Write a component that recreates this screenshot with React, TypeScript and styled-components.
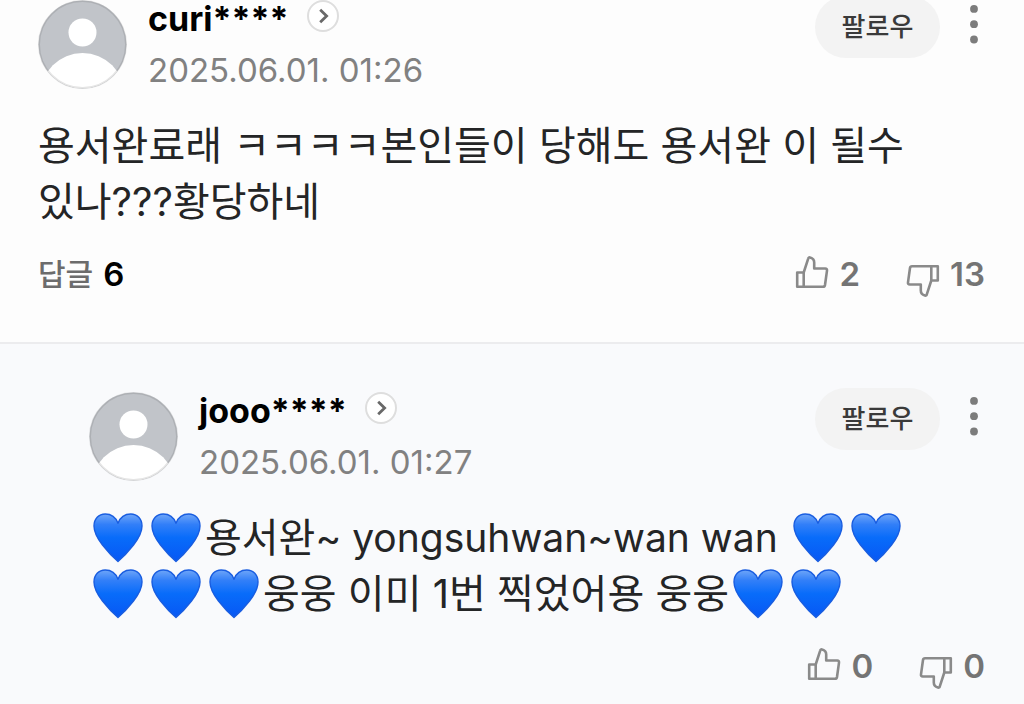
import React, { Fragment } from "react";
import styled, { createGlobalStyle } from "styled-components";

const GlobalStyle = createGlobalStyle`
  *, *::before, *::after { box-sizing: border-box; }
  body {
    margin: 0;
    background: #f9fafc;
    font-family: Inter, "Noto Sans CJK KR", sans-serif;
    color: #242526;
  }
  button { font: inherit; color: inherit; border: 0; padding: 0; background: none; cursor: pointer; }
`;

const Thread = styled.main`
  width: 100%;
`;

const Comment = styled.article<{ $reply?: boolean }>`
  display: flow-root;
  padding: ${(p) => (p.$reply ? "48px 39px 16px 89px" : "0 39px 46px 38px")};
  background: ${(p) => (p.$reply ? "#f9fafc" : "#fdfdfd")};
  border-top: ${(p) => (p.$reply ? "2px solid #ececee" : "0")};
`;

const Header = styled.header`
  display: flex;
  align-items: flex-start;
  height: 89px;
`;

const AvatarIcon = styled.svg`
  flex: none;
  width: 89px;
  height: 89px;
  margin-right: 21px;
`;

const Author = styled.div`
  flex: 1;
  min-width: 0;
`;

const NameRow = styled.div`
  display: flex;
  align-items: flex-start;
  gap: 18px;
  height: 38px;
`;

const Name = styled.strong`
  font-size: 34px;
  line-height: 38px;
  font-weight: 700;
  color: #000;
`;

const ProfileButton = styled.button`
  display: flex;
  width: 32px;
  height: 32px;
`;

const Posted = styled.time`
  display: block;
  margin-top: 12px;
  font-size: 33px;
  line-height: 40px;
  color: #818181;
`;

const Actions = styled.div`
  display: flex;
  align-items: center;
  gap: 28px;
  margin-top: -4px;
`;

const FollowButton = styled.button`
  width: 125px;
  height: 62px;
  border-radius: 31px;
  background: #f3f3f3;
  font-size: 26px;
  line-height: 32px;
  font-weight: 500;
  color: #3a3a3a;
`;

const MoreButton = styled.button`
  display: flex;
  width: 12px;
  height: 40px;
  margin: 0 5px 4px 0;
`;

const Body = styled.p`
  margin: 29px 0 0;
  font-size: 40px;
  line-height: 56px;
  color: #242526;
`;

const Latin = styled.span`
  font-size: 39px;
`;

const HeartIcon = styled.svg`
  width: 58px;
  height: 52px;
  vertical-align: -12px;
`;

const Footer = styled.footer`
  display: flex;
  align-items: center;
  height: 44px;
  margin-top: 22px;
`;

const RepliesButton = styled.button`
  display: flex;
  align-items: center;
  gap: 10px;
  font-size: 30px;
  line-height: 44px;
  font-weight: 500;
  color: #6c6c6c;
`;

const ReplyCount = styled.b`
  font-size: 33px;
  font-weight: 600;
  color: #000;
`;

const Votes = styled.div`
  display: flex;
  gap: 46px;
  margin-left: auto;
`;

const VoteButton = styled.button`
  display: flex;
  align-items: center;
  gap: 10px;
  font-size: 33px;
  line-height: 44px;
  font-weight: 600;
  color: #747474;
`;

const ThumbIcon = styled.svg<{ $down?: boolean }>`
  width: 34px;
  height: 34px;
  margin-top: ${(p) => (p.$down ? "14px" : "-4px")};
  transform: ${(p) => (p.$down ? "rotate(180deg)" : "none")};
`;

function Avatar({ id }: { id: string }) {
  return (
    <AvatarIcon viewBox="0 0 89 89" aria-hidden="true">
      <clipPath id={id}>
        <circle cx="44.5" cy="44.5" r="44" />
      </clipPath>
      <g clipPath={`url(#${id})`}>
        <rect width="89" height="89" fill="#c1c4c9" />
        <circle cx="44.5" cy="32.5" r="14" fill="#fff" />
        <circle cx="44.5" cy="95" r="42" fill="#fff" />
      </g>
      <circle cx="44.5" cy="44.5" r="43.5" fill="none" stroke="#000" strokeOpacity="0.1" strokeWidth="2" />
    </AvatarIcon>
  );
}

function Thumb({ down }: { down?: boolean }) {
  return (
    <ThumbIcon $down={down} viewBox="0 0 34 34" fill="none" stroke="#8a8a8a" strokeWidth="2.6" strokeLinejoin="round" aria-hidden="true">
      <path d="M2.2 17.5H8.7L13.2 3.6C13.5 2.5 14.1 2.1 15.1 2.4C17.8 3.1 19.2 4.8 19.2 7.4V13.5H30.2C31.6 13.5 32.2 14.3 32 15.6L30 30C29.8 31.2 29.3 31.8 28 31.8H2.2Z" />
      <path d="M8.7 17.5V31.8" />
    </ThumbIcon>
  );
}

function BlueHeart() {
  return (
    <HeartIcon viewBox="0 0 58 52" role="img" aria-label="💙">
      <defs>
        <linearGradient id="heartFill" x1="0" y1="0" x2="0" y2="1">
          <stop offset="0" stopColor="#6fa6f8" />
          <stop offset="0.22" stopColor="#327ff8" />
          <stop offset="0.5" stopColor="#086cfa" />
          <stop offset="1" stopColor="#0757f4" />
        </linearGradient>
      </defs>
      <path
        d="M29 49.5C25.5 46.5 19 40 13.5 33C8.5 26.6 5 20.5 5 14C5 6.8 9.8 2 16.2 2C22.2 2 26.8 5.4 29 11.2C31.2 5.4 35.8 2 41.8 2C48.2 2 53 6.8 53 14C53 20.5 49.5 26.6 44.5 33C39 40 32.5 46.5 29 49.5Z"
        fill="url(#heartFill)"
        stroke="#195de0"
        strokeWidth="1.4"
        strokeLinejoin="round"
      />
    </HeartIcon>
  );
}

function renderLine(text: string) {
  return text.split(/(💙|[a-z~][a-z~ ]*)/u).map((part, i) => {
    if (part === "💙") return <BlueHeart key={i} />;
    if (/^[a-z~]/.test(part)) return <Latin key={i}>{part}</Latin>;
    return <Fragment key={i}>{part}</Fragment>;
  });
}

interface CommentData {
  name: string;
  date: string;
  lines: string[];
  up: number;
  down: number;
  replies?: number;
  reply?: boolean;
}

const comments: CommentData[] = [
  {
    name: "curi****",
    date: "2025.06.01. 01:26",
    lines: ["용서완료래 ㅋㅋㅋㅋ본인들이 당해도 용서완 이 될수", "있나???황당하네"],
    up: 2,
    down: 13,
    replies: 6,
  },
  {
    name: "jooo****",
    date: "2025.06.01. 01:27",
    lines: ["💙💙용서완~ yongsuhwan~wan wan 💙💙", "💙💙💙웅웅 이미 1번 찍었어용 웅웅💙💙"],
    up: 0,
    down: 0,
    reply: true,
  },
];

export default function App() {
  return (
    <>
      <GlobalStyle />
      <Thread>
        {comments.map((c) => (
          <Comment key={c.name} $reply={c.reply}>
            <Header>
              <Avatar id={c.reply ? "avatarReply" : "avatarTop"} />
              <Author>
                <NameRow>
                  <Name>{c.name}</Name>
                  <ProfileButton aria-label="프로필 보기">
                    <svg width="32" height="32" viewBox="0 0 32 32" fill="none" aria-hidden="true">
                      <circle cx="16" cy="16" r="15" fill="#fff" stroke="#dedede" strokeWidth="2" />
                      <path d="M13.2 9.8L19.6 16L13.2 22.2" stroke="#686868" strokeWidth="2.8" />
                    </svg>
                  </ProfileButton>
                </NameRow>
                <Posted>{c.date}</Posted>
              </Author>
              <Actions>
                <FollowButton>팔로우</FollowButton>
                <MoreButton aria-label="더보기">
                  <svg width="12" height="40" viewBox="0 0 12 40" fill="#7c7c7c" aria-hidden="true">
                    <circle cx="6" cy="3.9" r="3.9" />
                    <circle cx="6" cy="19.2" r="3.9" />
                    <circle cx="6" cy="34.5" r="3.9" />
                  </svg>
                </MoreButton>
              </Actions>
            </Header>
            <Body>
              {c.lines.map((line, i) => (
                <Fragment key={i}>
                  {i > 0 && <br />}
                  {renderLine(line)}
                </Fragment>
              ))}
            </Body>
            <Footer>
              {c.replies !== undefined && (
                <RepliesButton>
                  답글 <ReplyCount>{c.replies}</ReplyCount>
                </RepliesButton>
              )}
              <Votes>
                <VoteButton aria-label={`좋아요 ${c.up}`}>
                  <Thumb />
                  {c.up}
                </VoteButton>
                <VoteButton aria-label={`싫어요 ${c.down}`}>
                  <Thumb down />
                  {c.down}
                </VoteButton>
              </Votes>
            </Footer>
          </Comment>
        ))}
      </Thread>
    </>
  );
}
